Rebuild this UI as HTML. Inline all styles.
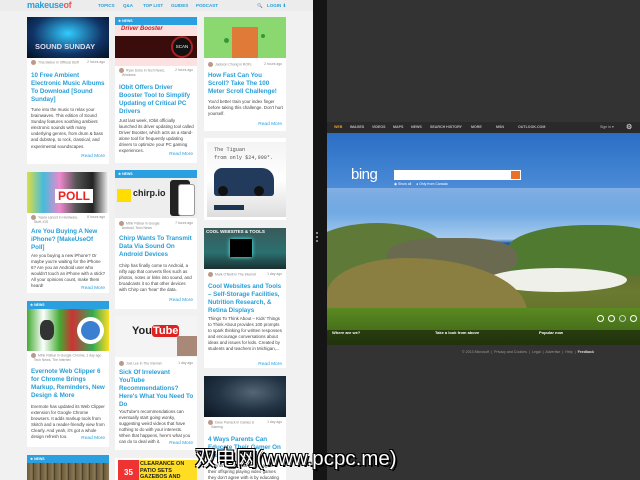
<!DOCTYPE html>
<html><head><meta charset="utf-8"><style>
*{margin:0;padding:0;box-sizing:border-box}
body{width:640px;height:480px;overflow:hidden;position:relative;background:#333;font-family:"Liberation Sans",sans-serif}
#left{position:absolute;left:0;top:0;width:313px;height:480px;background:#f1f1f1;overflow:hidden}
#strip{position:absolute;left:313px;top:0;width:14px;height:480px;background:#151515}
.a{position:absolute}
.card{position:absolute;background:#fff;overflow:hidden}
.img{position:absolute;left:0;width:100%}
.nb{position:absolute;left:0;width:100%;height:8px;background:#2aa0e0;color:#fff;font-size:3.5px;font-weight:bold;padding:2px 0 0 3px}
.meta{position:absolute;left:4px;right:4px;font-size:3.4px;color:#888;line-height:5px}
.meta i{display:inline-block;width:5px;height:5px;border-radius:50%;background:#b98;vertical-align:middle;margin-right:2px}
.meta b{position:absolute;right:0;top:0;font-weight:normal}
.t{position:absolute;left:4px;right:2px;font-size:6.3px;line-height:8px;font-weight:bold;color:#2a9fd8;letter-spacing:-0.05px}
.p{position:absolute;left:4px;right:3px;font-size:4.4px;line-height:6.1px;color:#444}
.rm{position:absolute;right:4px;font-size:4.8px;color:#2a9fd8}
.nav{position:absolute;top:3px;font-size:4.5px;color:#2a9fd8;font-weight:bold}
.bn{position:absolute;top:125px;font-size:3.6px;color:#bbb;font-weight:bold}
#wm{position:absolute;left:195px;top:441px;font-size:20.5px;color:#fff;font-family:"Liberation Sans","Noto Sans CJK SC",sans-serif;text-shadow:2px 2px 0 #000,-1px -1px 0 #000,1px -1px 0 #000,-1px 1px 0 #000;white-space:nowrap}
</style></head><body>
<div id="left">
 <div class="a" style="left:0;top:0;width:313px;height:11px;background:#ececec"></div>
 <div class="a" style="left:27px;top:0px;font-size:9px;font-weight:bold;color:#2a9fd8;letter-spacing:-0.3px">make<span style="color:#2a9fd8">use</span><span style="color:#e55">of</span></div>
 <div class="nav" style="left:98px">TOPICS</div>
 <div class="nav" style="left:123px">Q&amp;A</div>
 <div class="nav" style="left:143px">TOP LIST</div>
 <div class="nav" style="left:171px">GUIDES</div>
 <div class="nav" style="left:196px">PODCAST</div>
 <div class="nav" style="left:257px">🔍</div>
 <div class="nav" style="left:267px">LOGIN ⬇</div>

 <div class="card" style="left:27px;top:17px;width:82px;height:147px">
  <div class="img" style="top:0;height:41px;background:radial-gradient(ellipse at 50% 40%,#3cf 0,#136 60%,#012 100%)"></div>
  <div class="a" style="left:8px;top:25px;font-size:7.5px;font-weight:bold;color:#dde">SOUND SUNDAY</div>
  <div class="meta" style="top:43px"><i></i>Tina Sieber in Offbeat Stuff<b>2 hours ago</b></div>
  <div class="t" style="top:55px">10 Free Ambient Electronic Music Albums To Download [Sound Sunday]</div>
  <div class="p" style="top:90px">Tune into the music to relax your brainwaves. This edition of Sound Sunday features soothing ambient electronic sounds with many underlying genres, from drum &amp; bass and dubstep, to rock, classical, and experimental soundscapes.</div>
  <div class="rm" style="top:137px">Read More</div>
 </div>
 <div class="card" style="left:27px;top:172px;width:82px;height:121px">
  <div class="img" style="top:0;height:41px;background:linear-gradient(90deg,#dd4 0,#4bd 20%,#e8c 40%,#555 60%,#222 80%,#fff 100%)"></div>
  <div class="a" style="left:28px;top:17px;width:38px;height:14px;background:#fff;color:#e22;font-size:12px;font-weight:bold;line-height:14px;text-align:center">POLL</div>
  <div class="meta" style="top:43px"><i></i>Yaara Lancet in Hardware,<br>&nbsp;&nbsp;&nbsp;Stuff, iOS<b>8 hours ago</b></div>
  <div class="t" style="top:56px">Are You Buying A New iPhone? [MakeUseOf Poll]</div>
  <div class="p" style="top:81px">Are you buying a new iPhone? Or maybe you're waiting for the iPhone 6? Are you an Android user who wouldn't touch an iPhone with a stick? All your opinions count, make them heard!</div>
  <div class="rm" style="top:114px">Read More</div>
 </div>
 <div class="card" style="left:27px;top:301px;width:82px;height:146px">
  <div class="nb" style="top:0">★ NEWS</div>
  <div class="img" style="top:8px;height:42px;background:linear-gradient(90deg,#4a3 0,#fff 20%,#4a3 40%,#c33 55%,#3a5 80%,#fd2 100%)"></div>
  <div class="a" style="left:50px;top:16px;width:27px;height:27px;border-radius:50%;background:#fff"></div>
  <div class="a" style="left:54px;top:20px;width:19px;height:19px;border-radius:50%;background:#3a7fd0"></div>
  <div class="a" style="left:13px;top:19px;width:14px;height:20px;border-radius:40%;background:#333"></div>
  <div class="meta" style="top:52px"><i></i>Mihir Patkar in Google Chrome, 1 day ago<br>&nbsp;&nbsp;&nbsp;Tech News, The Internet</div>
  <div class="t" style="top:67px">Evernote Web Clipper 6 for Chrome Brings Markup, Reminders, New Design &amp; More</div>
  <div class="p" style="top:103px">Evernote has updated its Web Clipper extension for Google Chrome browsers. It adds markup tools from Skitch and a reader-friendly view from Clearly. And yeah, it's got a whole design refresh too.</div>
  <div class="rm" style="top:135px">Read More</div>
 </div>
 <div class="card" style="left:27px;top:455px;width:82px;height:30px">
  <div class="nb" style="top:0">★ NEWS</div>
  <div class="img" style="top:8px;height:22px;background:repeating-linear-gradient(90deg,#6a5a3a 0,#8a7a55 5px,#3a3020 7px)"></div>
 </div>

 <div class="card" style="left:115px;top:17px;width:82px;height:146px">
  <div class="nb" style="top:0">★ NEWS</div>
  <div class="img" style="top:8px;height:41px;background:#fde0e0"></div>
  <div class="a" style="left:0;top:19px;width:82px;height:22px;background:#3a0c0c"></div>
  <div class="a" style="left:56px;top:19px;width:22px;height:22px;border-radius:50%;background:#111;border:2px solid #a22;color:#fff;font-size:4.5px;text-align:center;line-height:18px">SCAN</div>
  <div class="a" style="left:6px;top:9px;font-size:6px;font-weight:bold;font-style:italic;color:#c22">Driver Booster</div>
  <div class="meta" style="top:51px"><i></i>Ryan Dube in Tech News,<br>&nbsp;&nbsp;&nbsp;Windows<b>2 hours ago</b></div>
  <div class="t" style="top:67px">IObit Offers Driver Booster Tool to Simplify Updating of Critical PC Drivers</div>
  <div class="p" style="top:101px">Just last week, IObit officially launched its driver updating tool called Driver Booster, which acts as a stand-alone tool for frequently updating drivers to optimize your PC gaming experiences.</div>
  <div class="rm" style="top:135px">Read More</div>
 </div>
 <div class="card" style="left:115px;top:170px;width:82px;height:139px">
  <div class="nb" style="top:0">★ NEWS</div>
  <div class="img" style="top:8px;height:40px;background:#eee"></div>
  <div class="a" style="left:2px;top:19px;width:14px;height:13px;background:#fd0"></div>
  <div class="a" style="left:18px;top:18px;font-size:9px;font-weight:bold;color:#222">chirp.io</div>
  <div class="a" style="left:55px;top:10px;width:20px;height:36px;background:#222;border-radius:3px"></div>
  <div class="a" style="left:63px;top:14px;width:17px;height:32px;background:#fff;border:1px solid #999;border-radius:3px"></div>
  <div class="meta" style="top:51px"><i></i>Mihir Patkar in Google<br>&nbsp;&nbsp;&nbsp;Android, Tech News<b>7 hours ago</b></div>
  <div class="t" style="top:65px">Chirp Wants To Transmit Data Via Sound On Android Devices</div>
  <div class="p" style="top:93px">Chirp has finally come to Android, a nifty app that converts files such as photos, notes or links into sound, and broadcasts it so that other devices with Chirp can 'hear' the data.</div>
  <div class="rm" style="top:128px">Read More</div>
 </div>
 <div class="card" style="left:115px;top:316px;width:82px;height:134px">
  <div class="img" style="top:0;height:41px;background:#f4f4f4"></div>
  <div class="a" style="left:17px;top:9px;font-size:11px;font-weight:bold;color:#222">You<span style="background:#d22;color:#fff;border-radius:3px;padding:0 1px">Tube</span></div>
  <div class="a" style="left:62px;top:20px;width:20px;height:20px;background:#a87"></div>
  <div class="meta" style="top:45px"><i></i>Joel Lee in The Internet<b>1 day ago</b></div>
  <div class="t" style="top:53px">Sick Of Irrelevant YouTube Recommendations? Here's What You Need To Do</div>
  <div class="p" style="top:93px">YouTube's recommendations can eventually start going wonky, suggesting weird videos that have nothing to do with your interests. When that happens, here's what you can do to deal with it.</div>
  <div class="rm" style="top:125px">Read More</div>
 </div>
 <div class="card" style="left:115px;top:458px;width:82px;height:30px">
  <div class="a" style="left:3px;top:2px;width:21px;height:22px;background:#e33;color:#fff;font-size:8px;font-weight:bold;text-align:center;line-height:26px">35</div>
  <div class="a" style="left:24px;top:2px;width:58px;height:22px;background:#fd2;color:#222;font-size:5.5px;font-weight:bold;line-height:6.5px;padding:1px">CLEARANCE ON PATIO SETS GAZEBOS AND SWINGS</div>
 </div>

 <div class="card" style="left:204px;top:17px;width:82px;height:114px">
  <div class="img" style="top:0;height:41px;background:#8cd870"></div>
  <div class="a" style="left:28px;top:10px;width:26px;height:31px;background:#e07a38"></div>
  <div class="a" style="left:20px;top:21px;width:5px;height:5px;border-radius:50%;background:#393"></div>
  <div class="a" style="left:57px;top:17px;width:4px;height:4px;border-radius:50%;background:#393"></div>
  <div class="meta" style="top:45px"><i></i>Jackson Chung in ROFL<b>2 hours ago</b></div>
  <div class="t" style="top:55px">How Fast Can You Scroll? Take The 100 Meter Scroll Challenge!</div>
  <div class="p" style="top:82px">You'd better train your index finger before taking this challenge. Don't hurt yourself.</div>
  <div class="rm" style="top:105px">Read More</div>
 </div>
 <div class="card" style="left:204px;top:138px;width:82px;height:82px">
  <div class="a" style="left:3px;top:4px;width:79px;height:75px;background:linear-gradient(#f4f4f4 0,#fff 50%,#ddd 100%)"></div>
  <div class="a" style="left:10px;top:8px;font-size:5.2px;color:#555;line-height:8px;font-family:'Liberation Mono',monospace;white-space:nowrap">The Tiguan<br>from only $24,990*.</div>
  <div class="a" style="left:10px;top:30px;width:60px;height:28px;background:#223a5c;border-radius:8px 12px 3px 3px"></div>
  <div class="a" style="left:14px;top:48px;width:10px;height:10px;border-radius:50%;background:#111"></div>
  <div class="a" style="left:50px;top:48px;width:10px;height:10px;border-radius:50%;background:#111"></div>
  <div class="a" style="left:10px;top:67px;width:30px;height:5px;background:#1c3554"></div>
 </div>
 <div class="card" style="left:204px;top:228px;width:82px;height:140px">
  <div class="img" style="top:0;height:41px;background:linear-gradient(#3a5a5a,#2b7070 60%,#1a3030)"></div>
  <div class="a" style="left:2px;top:1px;font-size:4.5px;font-weight:bold;color:#fff">COOL WEBSITES &amp; TOOLS</div>
  <div class="a" style="left:26px;top:11px;width:22px;height:18px;background:#000;box-shadow:0 0 4px #5ff"></div>
  <div class="meta" style="top:44px"><i></i>Mark O'Neill in The Internet<b>1 day ago</b></div>
  <div class="t" style="top:55px">Cool Websites and Tools – Self-Storage Facilities, Nutrition Research, &amp; Retina Displays</div>
  <div class="p" style="top:88px">Things To Think About – Kids' Things to Think About provides 100 prompts to spark thinking for written responses and encourage conversations about ideas and issues for kids. Created by students and teachers in Michigan,...</div>
  <div class="rm" style="top:134px">Read More</div>
 </div>
 <div class="card" style="left:204px;top:376px;width:82px;height:110px">
  <div class="img" style="top:0;height:41px;background:radial-gradient(ellipse at 60% 40%,#567 0,#234 50%,#0b1520 100%)"></div>
  <div class="meta" style="top:44px"><i></i>Dave Parrack in Games &amp;<br>&nbsp;&nbsp;&nbsp;Gaming<b>1 day ago</b></div>
  <div class="t" style="top:60px">4 Ways Parents Can Educate Their Gamer On Gaming</div>
  <div class="p" style="top:87px">Parents' children can argue against their offspring playing video games they don't agree with is by educating</div>
 </div>
</div>
<div id="strip"></div>
<div class="a" style="left:316px;top:232px;width:2px;height:2px;background:#888;box-shadow:0 4px 0 #888,0 8px 0 #888"></div>

<div class="a" style="left:327px;top:122px;width:313px;height:11px;background:#2a2a2a"></div>
<div class="bn" style="left:334px;color:#e8a020">WEB</div>
<div class="bn" style="left:350px">IMAGES</div>
<div class="bn" style="left:372px">VIDEOS</div>
<div class="bn" style="left:393px">MAPS</div>
<div class="bn" style="left:411px">NEWS</div>
<div class="bn" style="left:430px">SEARCH HISTORY</div>
<div class="bn" style="left:471px">MORE</div>
<div class="bn" style="left:496px">MSN</div>
<div class="bn" style="left:518px">OUTLOOK.COM</div>
<div class="bn" style="left:600px;font-weight:normal">Sign in ▾</div>
<div class="bn" style="left:626px;top:123px;font-size:7px">⚙</div>
<div class="a" style="left:327px;top:133px;width:313px;height:212px;overflow:hidden;background:linear-gradient(#2a6ec4 0,#4a8ad6 25%,#7ab0e6 40%,#a8ccee 50%,#1e5aa0 52%,#2464a8 56%,#5a6a30 60%,#6a7a30 75%,#5a6a20 100%)">
 <div class="a" style="left:0;top:55px;width:313px;height:25px;background:linear-gradient(rgba(255,255,255,.3),rgba(255,255,255,0))"></div>
 <div class="a" style="left:-20px;top:90px;width:140px;height:60px;border-radius:50% 50% 0 0;background:#5f7a38"></div>
 <div class="a" style="left:180px;top:92px;width:160px;height:50px;border-radius:50% 40% 0 0;background:#4f7a30"></div>
 <div class="a" style="left:60px;top:105px;width:130px;height:40px;border-radius:40%;background:#6a6a50"></div>
 <div class="a" style="left:160px;top:135px;width:140px;height:24px;border-radius:50%;background:#f0f0ea"></div>
 <div class="a" style="left:0;top:125px;width:200px;height:90px;border-radius:40% 60% 0 0;background:#8a7e40"></div>
 <div class="a" style="left:0;top:175px;width:313px;height:40px;background:linear-gradient(#5a8a20,#3a5a18)"></div>
 <div class="a" style="left:0;top:197px;width:313px;height:15px;background:rgba(0,0,0,.45)"></div>
 <div class="a" style="left:5px;top:197px;font-size:4px;color:#fff;font-weight:bold">Where are we?</div>
 <div class="a" style="left:108px;top:197px;font-size:4px;color:#fff;font-weight:bold">Take a look from above</div>
 <div class="a" style="left:212px;top:197px;font-size:4px;color:#fff;font-weight:bold">Popular now</div>
 <div class="a" style="left:270px;top:182px;width:7px;height:7px;border-radius:50%;border:1px solid #fff"></div>
 <div class="a" style="left:281px;top:182px;width:7px;height:7px;border-radius:50%;border:1px solid #fff"></div>
 <div class="a" style="left:292px;top:182px;width:7px;height:7px;border-radius:50%;border:1px solid #ccc"></div>
 <div class="a" style="left:303px;top:182px;width:7px;height:7px;border-radius:50%;border:1px solid #fff"></div>
 <div class="a" style="left:24px;top:33px;font-size:15px;color:#fff;letter-spacing:-0.5px">bing</div>
 <div class="a" style="left:67px;top:37px;width:127px;height:10px;background:#fff"></div>
 <div class="a" style="left:184px;top:38px;width:9px;height:8px;background:#e8702a"></div>
 <div class="a" style="left:67px;top:49px;font-size:3.5px;color:#fff">◉ Show all &nbsp;&nbsp;&nbsp;&nbsp;● Only from Canada</div>
</div>
<div class="a" style="left:462px;top:350px;font-size:3.6px;color:#999;white-space:nowrap">© 2013 Microsoft &nbsp;|&nbsp; Privacy and Cookies &nbsp;|&nbsp; Legal &nbsp;|&nbsp; Advertise &nbsp;|&nbsp; Help &nbsp;|&nbsp; <b style="color:#ddd">Feedback</b></div>

<div id="wm">双电网(www.pcpc.me)</div>
</body></html>
